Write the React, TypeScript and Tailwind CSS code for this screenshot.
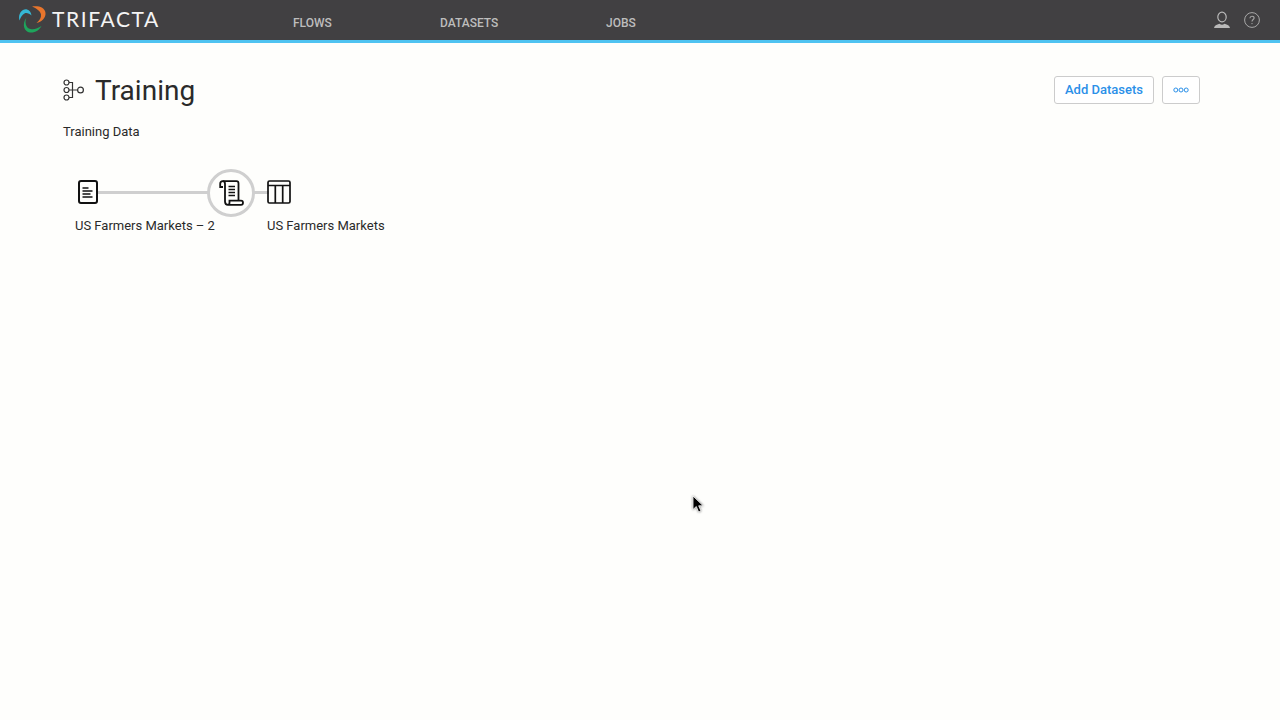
import { useState } from "react";

const roboto = "font-['Roboto',sans-serif]";

function Logo() {
  return (
    <svg width="30" height="30" viewBox="0 0 30 30" fill="none" className="shrink-0">
      <path d="M2.500 15.500C.5 8 6 3.500 10 4.500 12.500 5 14 7 14.500 10.500 12.500 8.500 9.500 7.500 7.500 8.500 5.500 9.500 3.800 12 2.500 15.500Z" fill="#35b8d6" />
      <path d="M15 1.500C21 .5 28 2 28.500 8 29 13 24.500 17 19.500 18 22.500 15.500 24.500 12.500 24 9.500 23.500 6 19.500 3.500 15 1.500Z" fill="#e8752c" />
      <path d="M9.500 12.500C7.500 17 8.500 23 13.500 24 17 24.700 21 23.500 24.500 21 22.500 25 18 28 13 27.500 7 27 4.500 19 9.500 12.500Z" fill="#1ea55c" />
    </svg>
  );
}

function FlowIcon() {
  return (
    <svg width="22" height="22" viewBox="0 0 22 22" fill="none" stroke="#333" strokeWidth="1.2">
      <circle cx="3.500" cy="3.500" r="2.500" />
      <circle cx="3.500" cy="11" r="2.500" />
      <circle cx="3.500" cy="18.500" r="2.500" />
      <circle cx="17.500" cy="11" r="2.900" />
      <path d="M6 3.500h3.500v15H6M6 11h8.700" />
    </svg>
  );
}

function FileIcon() {
  return (
    <svg width="22" height="26" viewBox="0 0 22 26" fill="none" stroke="#111" strokeWidth="2">
      <rect x="2" y="2" width="18" height="22" rx="2" />
      <path d="M5.500 9h6M5.500 12h10M5.500 15h8M5.500 18h10" strokeWidth="1.500" />
    </svg>
  );
}

function RecipeIcon() {
  return (
    <svg width="26" height="26" viewBox="0 0 26 26" fill="none" stroke="#111" strokeWidth="1.800">
      <path d="M5 7H2.200V3.800C2.200 2.200 3.400 1.200 4.800 1.200H18.500C19.800 1.200 20.500 2.300 20.500 3.500V20" />
      <path d="M4.800 1.200C6.200 1.200 7 2.300 7 3.800V21.500C7 23.500 8.300 24.800 10 24.800H23C24.500 24.800 25 23.600 25 22.700 25 21.500 24.200 20.600 23 20.600H11.500V22.500C11.500 23.800 11 24.800 10 24.800" />
      <path d="M10.500 6.500h6.500M10.500 9.500h6.500M10.500 12.500h6.500M10.500 15.500h6.500" strokeWidth="1.500" />
    </svg>
  );
}

function TableIcon() {
  return (
    <svg width="24" height="24" viewBox="0 0 24 24" fill="none" stroke="#111" strokeWidth="1.700">
      <rect x="1" y="1" width="22" height="22" rx="1.500" />
      <path d="M1 5.500h22M8.300 5.500V23M15.700 5.500V23" />
    </svg>
  );
}

function UserIcon() {
  return (
    <svg width="18" height="18" viewBox="0 0 18 18" fill="none">
      <ellipse cx="9" cy="6" rx="4.200" ry="4.900" stroke="#b9b9b9" strokeWidth="1.200" />
      <path d="M1 17c.3-2.500 2.500-3.300 5.500-4.300.9.700 1.700 1 2.500 1s1.600-.3 2.500-1c3 1 5.200 1.800 5.500 4.300H1Z" fill="#b9b9b9" />
    </svg>
  );
}

function HelpIcon() {
  return (
    <svg width="16" height="16" viewBox="0 0 16 16" fill="none">
      <circle cx="8" cy="8" r="7.400" stroke="#a8a8a8" strokeWidth="1" />
      <path d="M5.900 6.200C6 4.900 6.900 4.200 8 4.200c1.200 0 2.100.8 2.100 1.800 0 1.500-2.100 1.600-2.100 3.500" stroke="#a8a8a8" strokeWidth="1.100" />
      <circle cx="8" cy="11.600" r=".7" fill="#a8a8a8" />
    </svg>
  );
}

function DotsIcon() {
  return (
    <svg width="16" height="6" viewBox="0 0 16 6" fill="none" stroke="#2b90e8" strokeWidth="1">
      <circle cx="2.800" cy="3" r="2" />
      <circle cx="8" cy="3" r="2" />
      <circle cx="13.200" cy="3" r="2" />
    </svg>
  );
}

function Cursor() {
  return (
    <svg width="14" height="20" viewBox="0 0 14 20" className="drop-shadow-[0_0_1px_rgba(0,0,0,0.5)]">
      <path d="M1 1v13.500l3.300-3 2.300 5.500 2.400-1-2.300-5.200h4.500L1 1Z" fill="#000" stroke="#fff" strokeWidth="0.800" />
    </svg>
  );
}

function Header() {
  const nav = [
    { label: "FLOWS", className: "w-[147px]" },
    { label: "DATASETS", className: "w-[166px]" },
    { label: "JOBS", className: "" },
  ];

  return (
    <header className="flex h-[43px] items-center border-b-[3px] border-[#4fc3f1] bg-[#414042]">
      <div className="flex w-[293px] items-center pl-[17px]">
        <Logo />
        <span className="mt-[-3px] ml-[5px] font-['Lato',sans-serif] text-[21px] leading-none font-normal tracking-[1.600px] text-[#f4f4f4]">
          TRIFACTA
        </span>
      </div>
      <nav className="flex items-center pt-[5px]">
        {nav.map((n) => (
          <span key={n.label} className={`${n.className} text-[12px] font-medium text-[#bdbdbd]`}>
            {n.label}
          </span>
        ))}
      </nav>
      <div className="ml-auto flex items-center gap-[13px] pr-[20px]">
        <UserIcon />
        <HelpIcon />
      </div>
    </header>
  );
}

function FlowCanvas() {
  return (
    <div className="relative mt-[28px] h-[80px] w-[400px]">
      <div className="absolute top-[22px] left-[35px] h-[3px] w-[120px] bg-[#cfcfcf]" />
      <div className="absolute top-[22px] left-[190px] h-[3px] w-[16px] bg-[#cfcfcf]" />
      <div className="absolute top-[10px] left-[14px]">
        <FileIcon />
      </div>
      <div className="absolute top-0 left-[144px] flex h-[48px] w-[48px] items-center justify-center rounded-full border-[3px] border-[#cfcfcf] bg-[#fefefc]">
        <RecipeIcon />
      </div>
      <div className="absolute top-[11px] left-[204px]">
        <TableIcon />
      </div>
      <span className="absolute top-[47px] left-[12px] text-[13px] whitespace-nowrap text-[#2a2a2a]">
        US Farmers Markets – 2
      </span>
      <span className="absolute top-[47px] left-[204px] text-[13px] whitespace-nowrap text-[#2a2a2a]">
        US Farmers Markets
      </span>
    </div>
  );
}

export default function App() {
  const [title] = useState("Training");

  return (
    <div className={`${roboto} relative h-[720px] w-[1280px] overflow-hidden bg-[#fefefc]`}>
      <Header />
      <main className="px-[63px] pt-[33px] pr-[80px]">
        <div className="flex h-[28px] items-center justify-between">
          <div className="flex items-center gap-[10px]">
            <FlowIcon />
            <h1 className="pt-[2px] text-[28px] leading-[28px] font-normal text-[#2a2a2a]">{title}</h1>
          </div>
          <div className="flex items-center gap-[8px]">
            <button className="h-[28px] w-[100px] rounded-[3px] border border-[#cccccc] bg-white text-[13px] font-medium text-[#2b90e8]">
              Add Datasets
            </button>
            <button className="flex h-[28px] w-[38px] items-center justify-center rounded-[3px] border border-[#cccccc] bg-white">
              <DotsIcon />
            </button>
          </div>
        </div>
        <p className="mt-[19px] text-[13px] leading-[18px] text-[#2a2a2a]">Training Data</p>
        <FlowCanvas />
      </main>
      <div className="absolute top-[495px] left-[692px]">
        <Cursor />
      </div>
    </div>
  );
}
